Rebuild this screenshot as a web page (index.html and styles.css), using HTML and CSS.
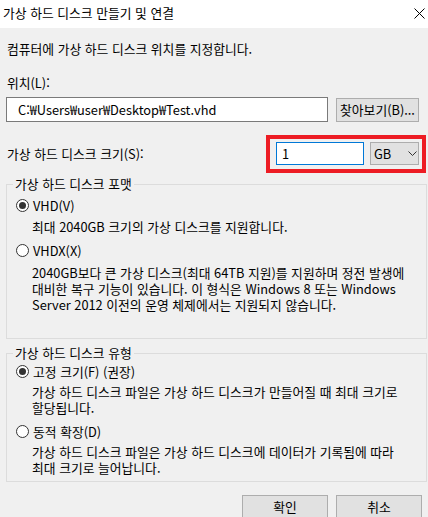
FILE: index.html
```html
<!DOCTYPE html>
<html lang="ko">
<head>
    <meta charset="UTF-8">
    <meta name="viewport" content="width=device-width, initial-scale=1.0">
    <title>가상 하드 디스크 만들기 및 연결</title>
    <link rel="stylesheet" href="styles.css">
</head>
<body>

    <div class="titlebar">
        <span class="title">가상 하드 디스크 만들기 및 연결</span>
        <svg class="close" width="11" height="11" viewBox="0 0 11 11">
            <path d="M0.5 0.5 L10.5 10.5 M10.5 0.5 L0.5 10.5" stroke="#000" stroke-width="1" fill="none"/>
        </svg>
    </div>

    <div class="dialog">
        <p class="intro">컴퓨터에 가상 하드 디스크 위치를 지정합니다.</p>

        <div class="field-label">위치(L):</div>
        <div class="location-row">
            <div class="textbox path">C:₩Users₩user₩Desktop₩Test.vhd</div>
            <div class="btn browse">찾아보기(B)...</div>
        </div>

        <div class="size-row">
            <span class="size-label">가상 하드 디스크 크기(S):</span>
            <div class="highlight">
                <div class="textbox size">1</div>
                <div class="combo">
                    <span>GB</span>
                    <svg width="9" height="5" viewBox="0 0 9 5">
                        <path d="M0.5 0.5 L4.5 4.5 L8.5 0.5" stroke="#333" stroke-width="1" fill="none"/>
                    </svg>
                </div>
            </div>
        </div>

        <!-- format group -->
        <fieldset class="group format">
            <legend>가상 하드 디스크 포맷</legend>
            <div class="radio checked">VHD(V)</div>
            <p class="desc first">최대 2040GB 크기의 가상 디스크를 지원합니다.</p>
            <div class="radio">VHDX(X)</div>
            <p class="desc">2040GB보다 큰 가상 디스크(최대 64TB 지원)를 지원하며 정전 발생에<br>대비한 복구 기능이 있습니다. 이 형식은 Windows 8 또는 Windows<br>Server 2012 이전의 운영 체제에서는 지원되지 않습니다.</p>
        </fieldset>

        <!-- type group -->
        <fieldset class="group type">
            <legend>가상 하드 디스크 유형</legend>
            <div class="radio checked">고정 크기(F) (권장)</div>
            <p class="desc">가상 하드 디스크 파일은 가상 하드 디스크가 만들어질 때 최대 크기로<br>할당됩니다.</p>
            <div class="radio">동적 확장(D)</div>
            <p class="desc">가상 하드 디스크 파일은 가상 하드 디스크에 데이터가 기록됨에 따라<br>최대 크기로 늘어납니다.</p>
        </fieldset>

        <div class="actions">
            <div class="btn">확인</div>
            <div class="btn">취소</div>
        </div>
    </div>

</body>
</html>
```

FILE: styles.css
```css
body {
    margin: 0;
    width: 428px;
    height: 517px;
    overflow: hidden;
    background-color: #f0f0f0;
    font-family: "Noto Sans CJK KR", sans-serif;
    font-size: 12.8px;
    line-height: 16px;
    color: #000;
}
.titlebar {
    height: 28px;
    background-color: #fff;
    display: flex;
    align-items: center;
    justify-content: space-between;
    padding: 0 3px 0 3px;
}
.title {
    margin-top: -3px;
}
.close {
    margin-top: -1px;
}
.dialog {
    padding: 0 1px 0 6px;
}
.intro {
    margin: 13px 0 0 1px;
}
.field-label {
    margin: 18px 0 0 1px;
}
.location-row {
    display: flex;
    gap: 8px;
    margin-top: 6px;
}
.textbox {
    box-sizing: border-box;
    background-color: #fff;
    border: 1px solid #7a7a7a;
    display: flex;
    align-items: center;
}
.path {
    width: 322px;
    height: 25px;
    padding-left: 11px;
}
.btn {
    box-sizing: border-box;
    background-color: #e1e1e1;
    border: 1px solid #adadad;
    display: flex;
    align-items: center;
    justify-content: center;
}
.browse {
    width: 83px;
    height: 24px;
    margin-top: 1px;
}
.size-row {
    display: flex;
    align-items: center;
    justify-content: space-between;
    margin-top: 13px;
    padding-right: 1px;
}
.size-label {
    margin-left: 1px;
}
.highlight {
    display: flex;
    gap: 6px;
    border: 4px solid #ed1c24;
    padding: 3px 3px 4px 6px;
}
.size {
    width: 88px;
    height: 23px;
    border-color: #0078d7;
    padding-left: 5px;
}
.combo {
    box-sizing: border-box;
    width: 49px;
    height: 23px;
    background-color: #e1e1e1;
    border: 1px solid #adadad;
    display: flex;
    align-items: center;
    justify-content: space-between;
    padding: 0 1px 0 3px;
}
.group {
    margin: 3px 0 0 0;
    border: 1px solid #dcdcdc;
    padding: 0 0 0 9px;
}
.group legend {
    padding: 0 2px;
    margin-left: -3px;
}
.format {
    padding-bottom: 25px;
}
.type {
    margin-top: 6px;
    padding-bottom: 5px;
}
.radio {
    position: relative;
    padding-left: 17px;
    margin-top: 8px;
}
.type .radio:first-of-type {
    margin-top: 3px;
}
.format .radio:first-of-type {
    margin-top: 6px;
}
.radio::before {
    content: "";
    position: absolute;
    left: 0;
    top: 1px;
    width: 13px;
    height: 13px;
    box-sizing: border-box;
    border: 1px solid #333;
    border-radius: 50%;
    background-color: #fff;
}
.radio.checked::after {
    content: "";
    position: absolute;
    left: 3px;
    top: 4px;
    width: 7px;
    height: 7px;
    border-radius: 50%;
    background-color: #333;
}
.desc {
    margin: 4px 0 0 16px;
}
.format .desc {
    margin-top: 6px;
}
.format .desc.first {
    margin-top: 5px;
}
.actions {
    display: flex;
    justify-content: flex-end;
    gap: 8px;
    margin-top: 13px;
    padding-right: 5px;
}
.actions .btn {
    width: 86px;
    height: 23px;
}
```
